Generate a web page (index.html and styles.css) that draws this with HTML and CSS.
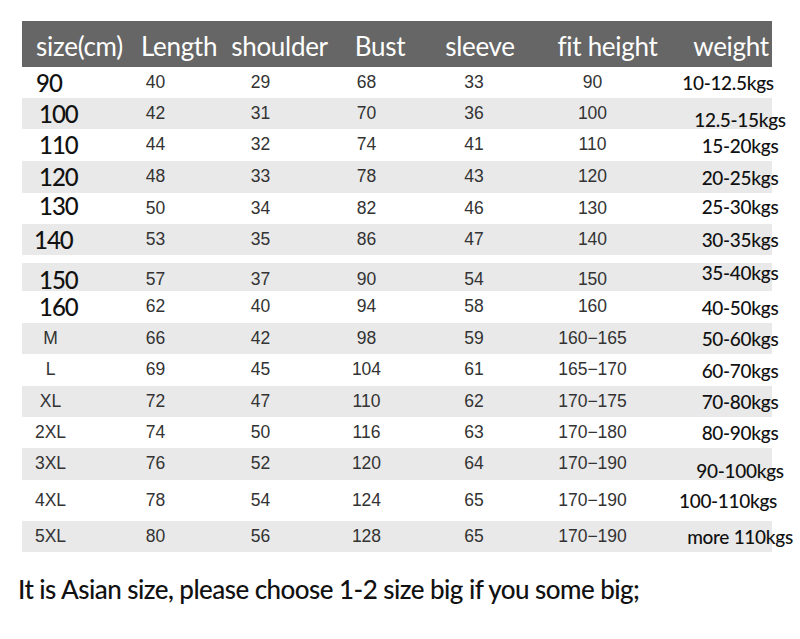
FILE: index.html
```html
<!DOCTYPE html>
<html lang="en">
<head>
<meta charset="utf-8">
<title>Size chart</title>
<link rel="stylesheet" href="styles.css">
</head>
<body>
<div class="chart">
  <div class="head">
    <span>size(cm)</span><span>Length</span><span>shoulder</span><span>Bust</span><span>sleeve</span><span>fit height</span><span>weight</span>
  </div>
  <div class="row"><span class="sz num n90">90</span><span>40</span><span>29</span><span>68</span><span>33</span><span>90</span><span class="wt lft">10-12.5kgs</span></div>
  <div class="row alt"><span class="sz num">100</span><span>42</span><span>31</span><span>70</span><span>36</span><span>100</span><span class="wt dn">12.5-15kgs</span></div>
  <div class="row h32"><span class="sz num">110</span><span>44</span><span>32</span><span>74</span><span>41</span><span>110</span><span class="wt">15-20kgs</span></div>
  <div class="row alt h32"><span class="sz num">120</span><span>48</span><span>33</span><span>78</span><span>43</span><span>120</span><span class="wt">20-25kgs</span></div>
  <div class="row"><span class="sz num up">130</span><span>50</span><span>34</span><span>82</span><span>46</span><span>130</span><span class="wt up">25-30kgs</span></div>
  <div class="row alt"><span class="sz num n140">140</span><span>53</span><span>35</span><span>86</span><span>47</span><span>140</span><span class="wt">30-35kgs</span></div>
  <div class="row alt short gap"><span class="sz num">150</span><span>57</span><span>37</span><span>90</span><span>54</span><span>150</span><span class="wt up2">35-40kgs</span></div>
  <div class="row h32"><span class="sz num">160</span><span>62</span><span>40</span><span>94</span><span>58</span><span>160</span><span class="wt">40-50kgs</span></div>
  <div class="row alt"><span class="sz let">M</span><span>66</span><span>42</span><span>98</span><span>59</span><span>160−165</span><span class="wt">50-60kgs</span></div>
  <div class="row h32"><span class="sz let">L</span><span>69</span><span>45</span><span>104</span><span>61</span><span>165−170</span><span class="wt">60-70kgs</span></div>
  <div class="row alt"><span class="sz let">XL</span><span>72</span><span>47</span><span>110</span><span>62</span><span>170−175</span><span class="wt">70-80kgs</span></div>
  <div class="row"><span class="sz let">2XL</span><span>74</span><span>50</span><span>116</span><span>63</span><span>170−180</span><span class="wt">80-90kgs</span></div>
  <div class="row alt h32"><span class="sz let">3XL</span><span>76</span><span>52</span><span>120</span><span>64</span><span>170−190</span><span class="wt dn">90-100kgs</span></div>
  <div class="row tall"><span class="sz let">4XL</span><span>78</span><span>54</span><span>124</span><span>65</span><span>170−190</span><span class="wt lft">100-110kgs</span></div>
  <div class="row alt last"><span class="sz let">5XL</span><span>80</span><span>56</span><span>128</span><span>65</span><span>170−190</span><span class="wt">more 110kgs</span></div>
</div>
<p class="note">It is Asian size, please choose 1-2 size big if you some big;</p>
</body>
</html>
```
FILE: styles.css
```css
html, body {
  margin: 0;
  padding: 0;
  background: #ffffff;
}

.chart {
  margin: 21px 0 0 22px;
  width: 750px;
}

.head {
  height: 46px;
  background: #666666;
  display: grid;
  grid-template-columns: 115px 84px 117px 84px 116px 139px 108px;
  align-items: center;
  justify-items: center;
  color: #ffffff;
  font-family: Lato, "Open Sans", sans-serif;
  font-size: 26px;
  letter-spacing: -0.3px;
  line-height: 1;
  padding-top: 3px;
  box-sizing: border-box;
  white-space: nowrap;
}

.row {
  height: 31px;
  display: grid;
  grid-template-columns: 57px 153px 57px 155px 60px 177px 118px;
  align-items: center;
  justify-items: center;
  font-family: "Liberation Sans", Arial, sans-serif;
  font-size: 17.5px;
  line-height: 1;
  color: #333333;
  white-space: nowrap;
}

.row.alt {
  background: #e9e9e9;
}

.row.h32 {
  height: 32px;
}

.row.short {
  height: 28px;
}

.row.tall {
  height: 41px;
}

.row.gap {
  margin-top: 8px;
}

.sz.num {
  justify-self: start;
  padding-left: 17px;
  font-family: Lato, "Open Sans", sans-serif;
  font-size: 24px;
  font-weight: 500;
  letter-spacing: -1px;
  color: #111111;
}

.sz.n90 {
  padding-left: 14px;
}

.sz.n140 {
  padding-left: 12px;
}

.sz.up {
  padding-bottom: 5px;
}

.sz.let {
  font-size: 17.5px;
}

.wt {
  font-family: Lato, "Open Sans", sans-serif;
  font-size: 19px;
  font-weight: 500;
  letter-spacing: -0.3px;
  color: #111111;
}

.wt.dn {
  padding-top: 12px;
}

.wt.up {
  padding-bottom: 5px;
}

.wt.up2 {
  padding-bottom: 14px;
}

.wt.lft {
  padding-right: 24px;
}

.note {
  margin: 22px 0 0 18px;
  font-family: Lato, "Open Sans", sans-serif;
  font-size: 26px;
  font-weight: 500;
  letter-spacing: -0.55px;
  line-height: 1.2;
  color: #111111;
}
```
